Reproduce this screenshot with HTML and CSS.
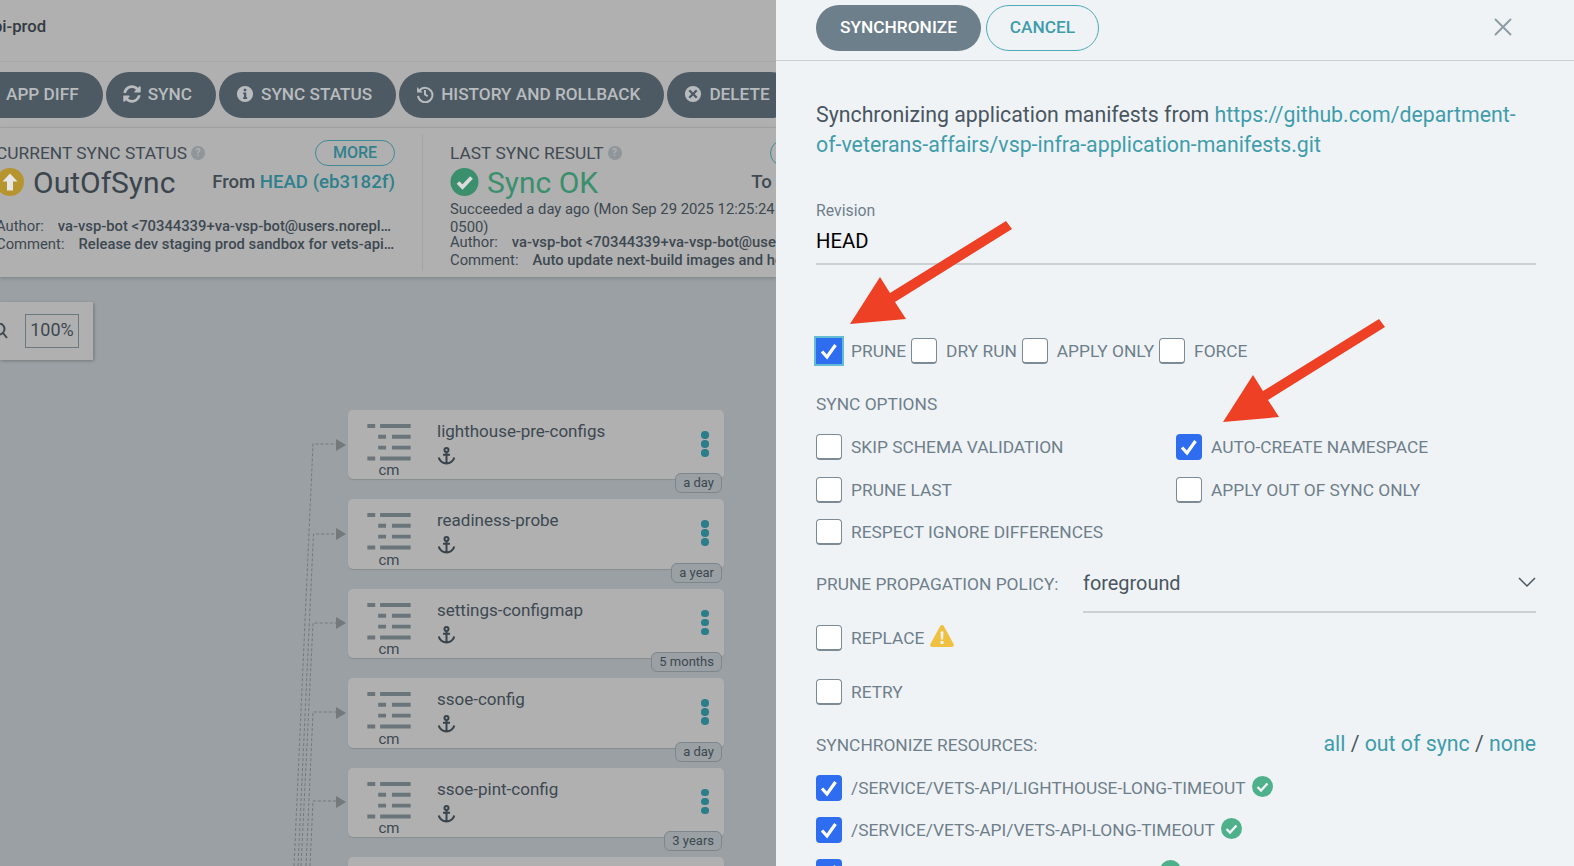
FILE: index.html
```html
<!DOCTYPE html>
<html>
<head>
    <title>vets-api-prod - Synchronize</title>
    <link rel="stylesheet" href="styles.css">
</head>
<body>
    <div class="main">
        <div class="topbar"><span class="app-title">vets-api-prod</span></div>

        <div class="toolbar">
            <div class="tool-btn tool-first">APP DIFF</div>
            <div class="tool-btn">
                <svg class="tool-icon" viewBox="0 0 512 512"><path d="M370.72 133.28C339.458 104.008 298.888 87.962 255.848 88c-77.458.068-144.328 53.178-162.791 126.85-1.344 5.363-6.122 9.15-11.651 9.15H24.103c-7.498 0-13.194-6.807-11.807-14.176C33.933 94.924 134.813 8 256 8c66.448 0 126.791 26.136 171.315 68.685L463.03 40.97C478.149 25.851 504 36.559 504 57.941V192c0 13.255-10.745 24-24 24H345.941c-21.382 0-32.09-25.851-16.971-40.971l41.75-41.749zM32 296h134.059c21.382 0 32.09 25.851 16.971 40.971l-41.75 41.75c31.262 29.273 71.835 45.319 114.876 45.28 77.418-.07 144.315-53.144 162.787-126.849 1.344-5.363 6.122-9.15 11.651-9.15h57.304c7.498 0 13.194 6.807 11.807 14.176C478.067 417.076 377.187 504 256 504c-66.448 0-126.791-26.136-171.315-68.685L48.97 471.03C33.851 486.149 8 475.441 8 454.059V320c0-13.255 10.745-24 24-24z"/></svg>
                SYNC
            </div>
            <div class="tool-btn">
                <svg class="tool-icon" viewBox="0 0 20 20"><path fill-rule="evenodd" d="M10 1a9 9 0 1 0 0 18 9 9 0 0 0 0-18zM8.6 4.2h2.8v2.8H8.6zM7.9 8.4h3.5v5.2h1v2H7.9v-2h1v-3.2h-1z"/></svg>
                SYNC STATUS
            </div>
            <div class="tool-btn">
                <svg class="tool-icon" viewBox="0 0 20 20"><path class="tool-stroke" d="M4 6.2A8 8 0 1 1 2.3 12"/><path d="M1.2 2.2v6.2h6.2z"/><path class="tool-stroke" d="M10 5.5v5l3 2"/></svg>
                HISTORY AND ROLLBACK
            </div>
            <div class="tool-btn">
                <svg class="tool-icon" viewBox="0 0 20 20"><path fill-rule="evenodd" d="M10 1a9 9 0 1 0 0 18 9 9 0 0 0 0-18zM6.8 5l3.2 3.2L13.200 5 15 6.800 11.800 10l3.200 3.200L13.200 15 10 11.800 6.800 15 5 13.200 8.200 10 5 6.800z"/></svg>
                DELETE
            </div>
        </div>

        <div class="status">
            <div class="status-col status-current">
                <div class="status-head">
                    <span>CURRENT SYNC STATUS</span><span class="help">?</span>
                    <span class="more-btn more-current">MORE</span>
                </div>
                <div class="status-main">
                    <svg class="status-icon" viewBox="0 0 28 28"><circle cx="14" cy="14" r="14" fill="#b6952f"/><path d="M14 5.500l7.500 8h-4.500v9h-6v-9H6.500z" fill="#e6e6e6"/></svg>
                    <span class="status-name">OutOfSync</span>
                    <span class="status-from">From <span class="teal">HEAD (eb3182f)</span></span>
                </div>
                <div class="meta meta-first"><span class="meta-key">Author:</span><span class="meta-val">va-vsp-bot &lt;70344339+va-vsp-bot@users.noreply.github.com&gt;</span></div>
                <div class="meta"><span class="meta-key">Comment:</span><span class="meta-val">Release dev staging prod sandbox for vets-api-prod and others</span></div>
            </div>
            <div class="status-col status-last">
                <div class="status-head">
                    <span>LAST SYNC RESULT</span><span class="help">?</span>
                    <span class="more-btn more-last">MORE</span>
                </div>
                <div class="status-main">
                    <svg class="status-icon-ok" viewBox="0 0 28 28"><circle cx="14" cy="14" r="14" fill="#3b8f6d"/><path d="M7.500 14.500l4.500 4.500 9-9.500" fill="none" stroke="#dcdcdc" stroke-width="3.800"/></svg>
                    <span class="status-name status-ok">Sync OK</span>
                    <span class="status-to">To HEAD (eb3182f)</span>
                </div>
                <div class="meta-text">Succeeded a day ago (Mon Sep 29 2025 12:25:24 GMT-<br>0500)</div>
                <div class="meta"><span class="meta-key">Author:</span><span class="meta-val">va-vsp-bot &lt;70344339+va-vsp-bot@users.noreply.github.com&gt;</span></div>
                <div class="meta"><span class="meta-key">Comment:</span><span class="meta-val">Auto update next-build images and helm values for prod</span></div>
            </div>
        </div>

        <div class="canvas">
            <svg class="edges" viewBox="0 277 776 589">
                <path d="M294 866L313 444H336M298 866L313.500 534H336M301 866L313 623H336M306 866L313 712H336M310 866L313 801H336"/>
                <polygon points="336,439 346,445 336,451"/>
                <polygon points="336,528 346,534 336,540"/>
                <polygon points="336,617 346,623 336,629"/>
                <polygon points="336,707 346,713 336,719"/>
                <polygon points="336,796 346,802 336,808"/>
            </svg>

            <div class="zoom-box">
                <svg class="zoom-icon" viewBox="0 0 8 16"><circle cx="-1" cy="6" r="5.500"/><path d="M3 10l4 5"/></svg>
                <div class="zoom-val">100%</div>
            </div>

            <div class="nodes">
                <div class="node">
                    <div class="node-kind">
                        <svg class="kind-icon" viewBox="0 0 44 38"><path d="M0 0h8v4H0zM13 0h31v4H13zM11 11h8v4h-8zM25 11h19v4H25zM11 22h8v4h-8zM25 22h19v4H25zM0 33h8v4H0zM13 33h31v4H13z"/></svg>
                        <span class="kind-label">cm</span>
                    </div>
                    <div class="node-body">
                        <div class="node-name">lighthouse-pre-configs</div>
                        <svg class="anchor" viewBox="0 0 19 18"><circle cx="9.500" cy="3" r="2"/><path d="M9.500 5v11.500M6 7.800h7M1.800 10.500c.5 3.500 4 6 7.700 6s7.200-2.500 7.700-6"/></svg>
                    </div>
                    <div class="node-dots"><i></i><i></i><i></i></div>
                    <span class="node-age">a day</span>
                </div>
                <div class="node">
                    <div class="node-kind">
                        <svg class="kind-icon" viewBox="0 0 44 38"><path d="M0 0h8v4H0zM13 0h31v4H13zM11 11h8v4h-8zM25 11h19v4H25zM11 22h8v4h-8zM25 22h19v4H25zM0 33h8v4H0zM13 33h31v4H13z"/></svg>
                        <span class="kind-label">cm</span>
                    </div>
                    <div class="node-body">
                        <div class="node-name">readiness-probe</div>
                        <svg class="anchor" viewBox="0 0 19 18"><circle cx="9.500" cy="3" r="2"/><path d="M9.500 5v11.500M6 7.800h7M1.800 10.500c.5 3.500 4 6 7.700 6s7.200-2.500 7.700-6"/></svg>
                    </div>
                    <div class="node-dots"><i></i><i></i><i></i></div>
                    <span class="node-age">a year</span>
                </div>
                <div class="node">
                    <div class="node-kind">
                        <svg class="kind-icon" viewBox="0 0 44 38"><path d="M0 0h8v4H0zM13 0h31v4H13zM11 11h8v4h-8zM25 11h19v4H25zM11 22h8v4h-8zM25 22h19v4H25zM0 33h8v4H0zM13 33h31v4H13z"/></svg>
                        <span class="kind-label">cm</span>
                    </div>
                    <div class="node-body">
                        <div class="node-name">settings-configmap</div>
                        <svg class="anchor" viewBox="0 0 19 18"><circle cx="9.500" cy="3" r="2"/><path d="M9.500 5v11.500M6 7.800h7M1.800 10.500c.5 3.500 4 6 7.700 6s7.200-2.500 7.700-6"/></svg>
                    </div>
                    <div class="node-dots"><i></i><i></i><i></i></div>
                    <span class="node-age">5 months</span>
                </div>
                <div class="node">
                    <div class="node-kind">
                        <svg class="kind-icon" viewBox="0 0 44 38"><path d="M0 0h8v4H0zM13 0h31v4H13zM11 11h8v4h-8zM25 11h19v4H25zM11 22h8v4h-8zM25 22h19v4H25zM0 33h8v4H0zM13 33h31v4H13z"/></svg>
                        <span class="kind-label">cm</span>
                    </div>
                    <div class="node-body">
                        <div class="node-name">ssoe-config</div>
                        <svg class="anchor" viewBox="0 0 19 18"><circle cx="9.500" cy="3" r="2"/><path d="M9.500 5v11.500M6 7.800h7M1.800 10.500c.5 3.500 4 6 7.700 6s7.200-2.500 7.700-6"/></svg>
                    </div>
                    <div class="node-dots"><i></i><i></i><i></i></div>
                    <span class="node-age">a day</span>
                </div>
                <div class="node">
                    <div class="node-kind">
                        <svg class="kind-icon" viewBox="0 0 44 38"><path d="M0 0h8v4H0zM13 0h31v4H13zM11 11h8v4h-8zM25 11h19v4H25zM11 22h8v4h-8zM25 22h19v4H25zM0 33h8v4H0zM13 33h31v4H13z"/></svg>
                        <span class="kind-label">cm</span>
                    </div>
                    <div class="node-body">
                        <div class="node-name">ssoe-pint-config</div>
                        <svg class="anchor" viewBox="0 0 19 18"><circle cx="9.500" cy="3" r="2"/><path d="M9.500 5v11.500M6 7.800h7M1.800 10.500c.5 3.500 4 6 7.700 6s7.200-2.500 7.700-6"/></svg>
                    </div>
                    <div class="node-dots"><i></i><i></i><i></i></div>
                    <span class="node-age">3 years</span>
                </div>
                <div class="node"></div>
            </div>
        </div>
    </div>

    <div class="panel">
        <div class="panel-top">
            <div class="btn-sync">SYNCHRONIZE</div>
            <div class="btn-cancel">CANCEL</div>
            <svg class="panel-close" viewBox="0 0 18 18"><path d="M1 1l16 16M17 1L1 17"/></svg>
        </div>

        <div class="panel-body">
            <p class="intro">Synchronizing application manifests from <a class="link">https://github.com/department-of-veterans-affairs/vsp-infra-application-manifests.git</a></p>

            <div class="rev-label">Revision</div>
            <div class="rev-value">HEAD</div>

            <div class="check-row">
                <span class="cb cb-on cb-focus"><svg viewBox="0 0 26 26"><path d="M6 13.500l5 5.500 8.500-12"/></svg></span><span class="cb-text">PRUNE</span>
                <span class="cb"></span><span class="cb-text">DRY RUN</span>
                <span class="cb"></span><span class="cb-text">APPLY ONLY</span>
                <span class="cb"></span><span class="cb-text">FORCE</span>
            </div>

            <div class="section-label">SYNC OPTIONS</div>
            <div class="options">
                <div class="opt"><span class="cb"></span><span class="cb-text">SKIP SCHEMA VALIDATION</span></div>
                <div class="opt"><span class="cb cb-on"><svg viewBox="0 0 26 26"><path d="M6 13.500l5 5.500 8.500-12"/></svg></span><span class="cb-text">AUTO-CREATE NAMESPACE</span></div>
                <div class="opt"><span class="cb"></span><span class="cb-text">PRUNE LAST</span></div>
                <div class="opt"><span class="cb"></span><span class="cb-text">APPLY OUT OF SYNC ONLY</span></div>
                <div class="opt"><span class="cb"></span><span class="cb-text">RESPECT IGNORE DIFFERENCES</span></div>
            </div>

            <div class="policy">
                <span class="policy-label">PRUNE PROPAGATION POLICY:</span>
                <div class="policy-select">
                    <span>foreground</span>
                    <svg class="chevron" viewBox="0 0 18 11"><path d="M1 1l8 8 8-8"/></svg>
                </div>
            </div>

            <div class="opt opt-replace">
                <span class="cb"></span><span class="cb-text">REPLACE</span>
                <svg class="warn" viewBox="0 0 24 22"><path d="M12 0c.8 0 1.400.4 1.800 1.100l9.800 18c.7 1.300-.1 2.900-1.700 2.900H2.100C.5 22-.3 20.400.4 19.100l9.800-18C10.600.4 11.200 0 12 0z" fill="#f0c040"/><path d="M10.500 6.500h3l-.5 8h-2zM10.500 16h3v3h-3z" fill="#f0f3f6"/></svg>
            </div>
            <div class="opt opt-retry"><span class="cb"></span><span class="cb-text">RETRY</span></div>

            <div class="res-head">
                <span class="section-text">SYNCHRONIZE RESOURCES:</span>
                <span class="res-links"><a class="link">all</a> / <a class="link">out of sync</a> / <a class="link">none</a></span>
            </div>

            <div class="res-row res-first">
                <span class="cb cb-on"><svg viewBox="0 0 26 26"><path d="M6 13.500l5 5.500 8.500-12"/></svg></span><span class="cb-text">/SERVICE/VETS-API/LIGHTHOUSE-LONG-TIMEOUT</span>
                <svg class="res-ok" viewBox="0 0 21 21"><circle cx="10.500" cy="10.500" r="10.500"/><path d="M5.500 11l3.500 3.500 6.500-7"/></svg>
            </div>
            <div class="res-row">
                <span class="cb cb-on"><svg viewBox="0 0 26 26"><path d="M6 13.500l5 5.500 8.500-12"/></svg></span><span class="cb-text">/SERVICE/VETS-API/VETS-API-LONG-TIMEOUT</span>
                <svg class="res-ok" viewBox="0 0 21 21"><circle cx="10.500" cy="10.500" r="10.500"/><path d="M5.500 11l3.500 3.500 6.500-7"/></svg>
            </div>
            <div class="res-row">
                <span class="cb cb-on"><svg viewBox="0 0 26 26"><path d="M6 13.500l5 5.500 8.500-12"/></svg></span><span class="res-gap"></span>
                <svg class="res-ok" viewBox="0 0 21 21"><circle cx="10.500" cy="10.500" r="10.500"/><path d="M5.500 11l3.500 3.500 6.500-7"/></svg>
            </div>
        </div>
    </div>

    <svg class="arrows" viewBox="0 0 1574 866">
        <polygon points="1006,221 1012,229 895,302 906,319 850,324 880,277 890,293"/>
        <polygon points="1379,319 1385,327 1268,400 1279,417 1223,422 1253,375 1263,391"/>
    </svg>
</body>
</html>
```

FILE: styles.css
```css
* {
    box-sizing: border-box;
}

body {
    font-family: Roboto, "Liberation Sans", sans-serif;
    display: flex;
    height: 100vh;
    margin: 0;
    overflow: hidden;
    background-color: #f0f3f6;
}

/* left side, dimmed by the sliding panel */
.main {
    flex: none;
    width: 776px;
    display: flex;
    flex-direction: column;
    overflow: hidden;
    background-color: #9aa0a3;
    color: #3d4850;
}

.topbar {
    flex: none;
    height: 62px;
    display: flex;
    align-items: center;
    padding-bottom: 8px;
    background-color: #b0b0b0;
    border-bottom: 1px solid #a7a9a9;
}

.app-title {
    margin-left: -53px;
    font-size: 16.700px;
    font-weight: 500;
    color: #333b41;
}

.toolbar {
    flex: none;
    height: 66px;
    display: flex;
    gap: 3px;
    padding-top: 10px;
    background-color: #b0b0b0;
    border-bottom: 1px solid #a7a9a9;
    white-space: nowrap;
}

.tool-btn {
    flex: none;
    height: 46px;
    display: flex;
    align-items: center;
    gap: 7px;
    padding: 0 24px 3px 17px;
    border-radius: 23px;
    background-color: #4e5a63;
    color: #b8bcbf;
    font-size: 17.200px;
    font-weight: 500;
}

.tool-first {
    margin-left: -60px;
    padding-left: 66px;
}

.tool-icon {
    width: 18px;
    height: 18px;
    fill: #b8bcbf;
}

.tool-stroke {
    fill: none;
    stroke: #b8bcbf;
    stroke-width: 2.200;
}

.status {
    flex: none;
    height: 149px;
    display: flex;
    background-color: #b0b0b0;
    box-shadow: 0 1px 4px rgba(0, 0, 0, 0.2);
    position: relative;
    overflow: hidden;
}

.status-col {
    flex: none;
    padding-top: 12px;
    font-size: 17.350px;
}

.status-current {
    width: 422px;
}

.status-current .status-head,
.status-current .status-main,
.status-current .meta {
    margin-left: -4px;
    width: 399px;
}

.status-last {
    width: 400px;
    margin: 6px 0;
    padding: 6px 0 0 27px;
    border-left: 1px solid #a2a4a4;
    box-sizing: content-box;
}

.status-head {
    height: 26px;
    display: flex;
    align-items: center;
    color: #3f4a52;
}

.help {
    width: 14px;
    height: 14px;
    margin-left: 4px;
    border-radius: 50%;
    background-color: #8f9599;
    color: #b0b0b0;
    font-size: 11px;
    font-weight: 700;
    line-height: 14px;
    text-align: center;
}

.more-btn {
    width: 80px;
    height: 26px;
    margin-left: auto;
    border: 1px solid #3f8a97;
    border-radius: 13px;
    color: #33808d;
    font-size: 16px;
    font-weight: 500;
    line-height: 24px;
    text-align: center;
}

.status-main {
    height: 32px;
    display: flex;
    align-items: center;
    white-space: nowrap;
}

.status-icon {
    flex: none;
    width: 28px;
    height: 28px;
    margin-right: 9px;
}

.status-icon-ok {
    flex: none;
    width: 29px;
    height: 28px;
    margin-right: 8px;
}

.status-name {
    font-size: 30px;
    color: #3a454d;
}

.status-ok {
    color: #3b8f6d;
}

.status-from {
    margin-left: auto;
    font-size: 18.600px;
    font-weight: 500;
    color: #3f4a52;
}

.status-to {
    margin-left: 153px;
    font-size: 18.600px;
    font-weight: 500;
    color: #3f4a52;
}

.teal {
    color: #2f808d;
}

.meta {
    display: flex;
    gap: 14px;
    height: 18px;
    font-size: 14.800px;
    line-height: 18px;
    white-space: nowrap;
}

.meta-first {
    margin-top: 18.500px;
}

.meta-key {
    flex: none;
}

.meta-val {
    overflow: hidden;
    text-overflow: ellipsis;
    font-weight: 500;
}

.meta-text {
    margin-top: 2px;
    height: 33px;
    font-size: 14.800px;
    line-height: 18px;
    white-space: nowrap;
}

/* graph area */
.canvas {
    flex: 1;
    position: relative;
    overflow: hidden;
}

.edges {
    position: absolute;
    left: 0;
    top: 0;
    width: 776px;
    height: 589px;
}

.edges path {
    fill: none;
    stroke: #74797b;
    stroke-width: 1;
    stroke-dasharray: 3 2;
}

.edges polygon {
    fill: #74797b;
}

.zoom-box {
    position: absolute;
    left: 0;
    top: 25px;
    width: 93px;
    height: 58px;
    display: flex;
    align-items: center;
    gap: 17px;
    background-color: #b0b0b0;
    box-shadow: 1px 1px 3px rgba(0, 0, 0, 0.25);
}

.zoom-icon {
    width: 8px;
    height: 16px;
    fill: none;
    stroke: #3d4850;
    stroke-width: 2;
}

.zoom-val {
    width: 54px;
    height: 34px;
    border: 1px solid #6b7880;
    font-size: 18px;
    line-height: 30px;
    text-align: center;
}

.nodes {
    position: absolute;
    left: 348px;
    top: 133px;
    width: 376px;
    display: flex;
    flex-direction: column;
    gap: 20px;
}

.node {
    position: relative;
    flex: none;
    height: 69.400px;
    display: flex;
    padding-left: 19px;
    background-color: #b0b0b0;
    border-radius: 5px;
    box-shadow: 0 1px 1px rgba(0, 0, 0, 0.12);
}

.node-kind {
    flex: none;
    width: 44px;
    margin-top: 14px;
    display: flex;
    flex-direction: column;
    align-items: center;
}

.kind-icon {
    width: 44px;
    height: 38px;
    fill: #6a747b;
}

.kind-label {
    font-size: 15px;
    line-height: 17px;
    margin-top: 1px;
}

.node-body {
    flex: 1;
    margin-left: 26px;
    padding-top: 10px;
}

.node-name {
    font-size: 17px;
    line-height: 22px;
}

.anchor {
    display: block;
    width: 19px;
    height: 18px;
    margin-top: 5px;
    fill: none;
    stroke: #38434b;
    stroke-width: 2;
}

.node-dots {
    flex: none;
    width: 8px;
    margin: 21px 15px 0 0;
    display: flex;
    flex-direction: column;
    gap: 1.500px;
}

.node-dots i {
    width: 7.500px;
    height: 7.500px;
    border-radius: 50%;
    background-color: #2c7d8a;
}

.node-age {
    position: absolute;
    right: 2px;
    bottom: -14px;
    height: 20px;
    padding: 0 7px;
    border: 1px solid #7d868c;
    border-radius: 6px;
    background-color: #9aa0a3;
    font-size: 13px;
    line-height: 18px;
}

/* sync panel */
.panel {
    flex: 1;
    overflow: hidden;
    color: #6e7f8a;
}

.panel-top {
    height: 61px;
    display: flex;
    gap: 5px;
    padding: 5px 0 0 40px;
    border-bottom: 1px solid #ccd0d3;
}

.btn-sync {
    width: 165px;
    height: 46px;
    border-radius: 23px;
    background-color: #6d7f8b;
    color: #fff;
    font-size: 17.300px;
    font-weight: 500;
    line-height: 44px;
    text-align: center;
}

.btn-cancel {
    width: 113px;
    height: 46px;
    border: 1px solid #4ba9b8;
    border-radius: 23px;
    color: #3f9dab;
    font-size: 17.300px;
    font-weight: 500;
    line-height: 42px;
    text-align: center;
}

.panel-close {
    width: 18px;
    height: 18px;
    margin: 13px 0 0 390px;
    fill: none;
    stroke: #8e9ca6;
    stroke-width: 2;
}

.panel-body {
    padding: 0 38px 0 40px;
}

.intro {
    margin: 39px 0 0;
    font-size: 21.300px;
    line-height: 30px;
    color: #495660;
}

.link {
    color: #3f9dab;
}

.rev-label {
    margin-top: 42px;
    font-size: 15.800px;
    line-height: 18px;
}

.rev-value {
    height: 45px;
    border-bottom: 2px solid #ccd0d3;
    color: #000;
    font-size: 20.300px;
    line-height: 43px;
}

.check-row {
    margin-top: 73px;
    height: 26px;
    display: flex;
    align-items: center;
}

.check-row .cb-text {
    margin-right: 5px;
}

.cb {
    flex: none;
    width: 26px;
    height: 26px;
    display: block;
    background-color: #fff;
    border: 1px solid #7b8a95;
    border-bottom-width: 2px;
    border-radius: 4px;
}

.cb-on {
    background-color: #2f6df0;
    border: none;
}

.cb-on svg {
    display: block;
    width: 26px;
    height: 26px;
    fill: none;
    stroke: #fff;
    stroke-width: 3.200;
}

.cb-focus {
    outline: 2px solid #62bcd4;
    outline-offset: 0;
    border-radius: 0;
}

.cb-text {
    margin: 0 6px 0 9px;
    font-size: 17.350px;
    white-space: nowrap;
}

.section-label {
    margin-top: 29px;
    font-size: 17.350px;
    line-height: 22px;
}

.options {
    margin-top: 19px;
    display: grid;
    grid-template-columns: 360px 1fr;
    row-gap: 16.500px;
}

.opt {
    height: 26px;
    display: flex;
    align-items: center;
}

.policy {
    margin-top: 15px;
    display: flex;
    font-size: 17.350px;
    line-height: 48px;
}

.policy-label {
    flex: none;
    width: 267px;
    white-space: nowrap;
}

.policy-select {
    flex: 1;
    height: 53px;
    display: flex;
    justify-content: space-between;
    border-bottom: 2px solid #ccd0d3;
    font-size: 19.900px;
    color: #495660;
}

.chevron {
    width: 18px;
    height: 11px;
    margin-top: 17px;
    fill: none;
    stroke: #495660;
    stroke-width: 1.500;
}

.opt-replace {
    margin-top: 12px;
}

.warn {
    width: 24px;
    height: 22px;
    margin: -4px 0 0 0;
}

.opt-retry {
    margin-top: 28px;
}

.res-head {
    margin-top: 25px;
    height: 30px;
    display: flex;
    justify-content: space-between;
    font-size: 17.350px;
    line-height: 30px;
}

.res-links {
    margin-top: -1px;
    font-size: 21.300px;
    color: #495660;
}

.res-row {
    margin-top: 16px;
    height: 26px;
    display: flex;
    align-items: center;
}

.res-first {
    margin-top: 15px;
}

.res-gap {
    width: 318px;
}

.res-ok {
    flex: none;
    width: 21px;
    height: 21px;
    margin: -3px 0 0 0;
}

.res-ok circle {
    fill: #4fb08c;
}

.res-ok path {
    fill: none;
    stroke: #f0f3f6;
    stroke-width: 2.400;
}

/* callouts drawn on top of the screenshot */
.arrows {
    position: absolute;
    left: 0;
    top: 0;
    width: 1574px;
    height: 866px;
    fill: #ed4024;
    pointer-events: none;
}
```
